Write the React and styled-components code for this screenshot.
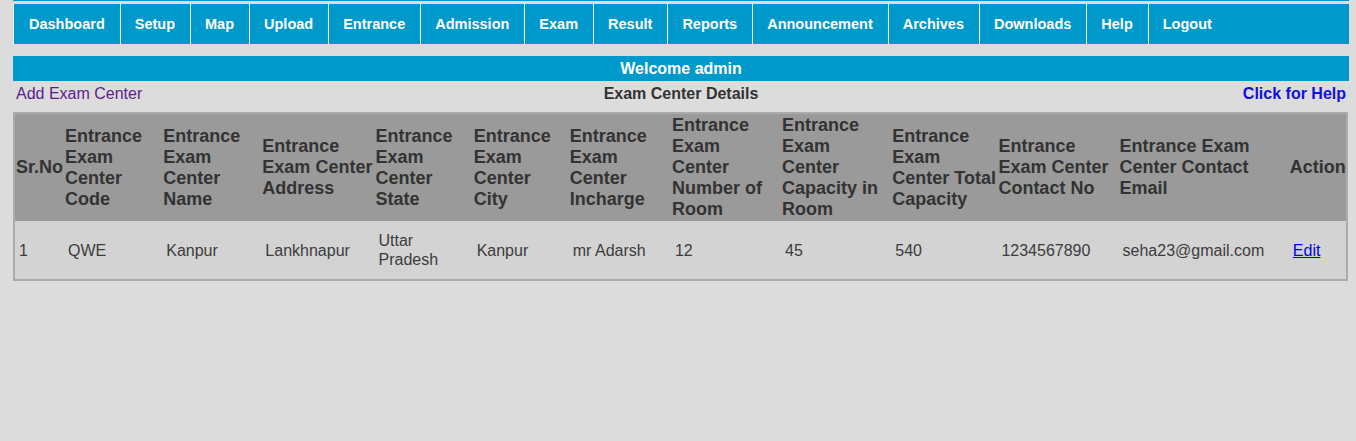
import React from 'react';
import styled, { createGlobalStyle } from 'styled-components';

const GlobalStyle = createGlobalStyle`
  body {
    margin: 0;
    background: #dcdcdc;
    font-family: "Liberation Sans", Arial, sans-serif;
  }
`;

const Page = styled.div`
  width: 1336px;
  margin-left: 13px;
  border-top: 1px solid #0099cc;
  padding-top: 3px;
`;

const Nav = styled.ul`
  display: flex;
  margin: 0;
  padding: 0;
  list-style: none;
  background: #0099cc;
  height: 40px;
`;

const NavItem = styled.li`
  display: flex;
  align-items: center;
  padding: 0 15px 0 ${(p) => (p.first ? 15 : 14)}px;
  border-left: 1px solid #ffffff;
  color: #ffffff;
  font-weight: bold;
  font-size: 14.5px;
`;

const Welcome = styled.div`
  margin-top: 12px;
  height: 25px;
  background: #0099cc;
  color: #ffffff;
  font-weight: bold;
  font-size: 16px;
  display: flex;
  align-items: center;
  justify-content: center;
`;

const InfoRow = styled.div`
  display: grid;
  grid-template-columns: 1fr auto 1fr;
  align-items: center;
  height: 25px;
  padding: 0 3px;
`;

const AddLink = styled.a`
  color: #5b1e8c;
  font-size: 16px;
  text-decoration: none;
`;

const Title = styled.div`
  color: #333333;
  font-weight: bold;
  font-size: 16px;
  text-align: center;
`;

const HelpLink = styled.a`
  justify-self: end;
  color: #1010e0;
  font-weight: bold;
  font-size: 16px;
  text-decoration: none;
`;

const Table = styled.table`
  margin-top: 6px;
  width: 1335px;
  table-layout: fixed;
  border-collapse: collapse;
  border: 2px solid #ababab;
`;

const Th = styled.th`
  background: #9a9a9a;
  color: #333333;
  font-size: 18px;
  font-weight: bold;
  text-align: left;
  vertical-align: middle;
  padding: 1px 0 1px 1px;
  line-height: 21px;
`;

const Td = styled.td`
  background: #d3d3d3;
  color: #3c3c3c;
  font-size: 16px;
  padding: 10px 0 10px 4px;
  vertical-align: middle;
  line-height: 19px;
`;

const EditLink = styled.a`
  color: #0000ee;
  text-decoration: underline;
`;

const menu = [
  'Dashboard', 'Setup', 'Map', 'Upload', 'Entrance', 'Admission', 'Exam',
  'Result', 'Reports', 'Announcement', 'Archives', 'Downloads', 'Help', 'Logout',
];

const columns = [
  { label: 'Sr.No', width: 50 },
  { label: 'Entrance Exam Center Code', width: 98 },
  { label: 'Entrance Exam Center Name', width: 99 },
  { label: 'Entrance Exam Center Address', width: 113 },
  { label: 'Entrance Exam Center State', width: 98 },
  { label: 'Entrance Exam Center City', width: 96 },
  { label: 'Entrance Exam Center Incharge', width: 102 },
  { label: 'Entrance Exam Center Number of Room', width: 110 },
  { label: 'Entrance Exam Center Capacity in Room', width: 110 },
  { label: 'Entrance Exam Center Total Capacity', width: 106 },
  { label: 'Entrance Exam Center Contact No', width: 121 },
  { label: 'Entrance Exam Center Contact Email', width: 170 },
  { label: 'Action', width: 58 },
];

const rows = [
  ['1', 'QWE', 'Kanpur', 'Lankhnapur', 'Uttar Pradesh', 'Kanpur', 'mr Adarsh', '12', '45', '540', '1234567890', 'seha23@gmail.com'],
];

const App = () => {
  return (
    <>
      <GlobalStyle />
      <Page>
        <Nav>
          {menu.map((item, i) => (
            <NavItem key={item} first={i === 0}>{item}</NavItem>
          ))}
        </Nav>
        <Welcome>Welcome admin</Welcome>
        <InfoRow>
          <AddLink href="#">Add Exam Center</AddLink>
          <Title>Exam Center Details</Title>
          <HelpLink href="#">Click for Help</HelpLink>
        </InfoRow>
        <Table>
          <colgroup>
            {columns.map((c) => (
              <col key={c.label} style={{ width: c.width }} />
            ))}
          </colgroup>
          <thead>
            <tr>
              {columns.map((c) => (
                <Th key={c.label}>{c.label}</Th>
              ))}
            </tr>
          </thead>
          <tbody>
            {rows.map((row, r) => (
              <tr key={`row-${r}`}>
                {row.map((cell, i) => (
                  <Td key={`cell-${i}`}>{cell}</Td>
                ))}
                <Td>
                  <EditLink href="#">Edit</EditLink>
                </Td>
              </tr>
            ))}
          </tbody>
        </Table>
      </Page>
    </>
  );
};

export default App;
